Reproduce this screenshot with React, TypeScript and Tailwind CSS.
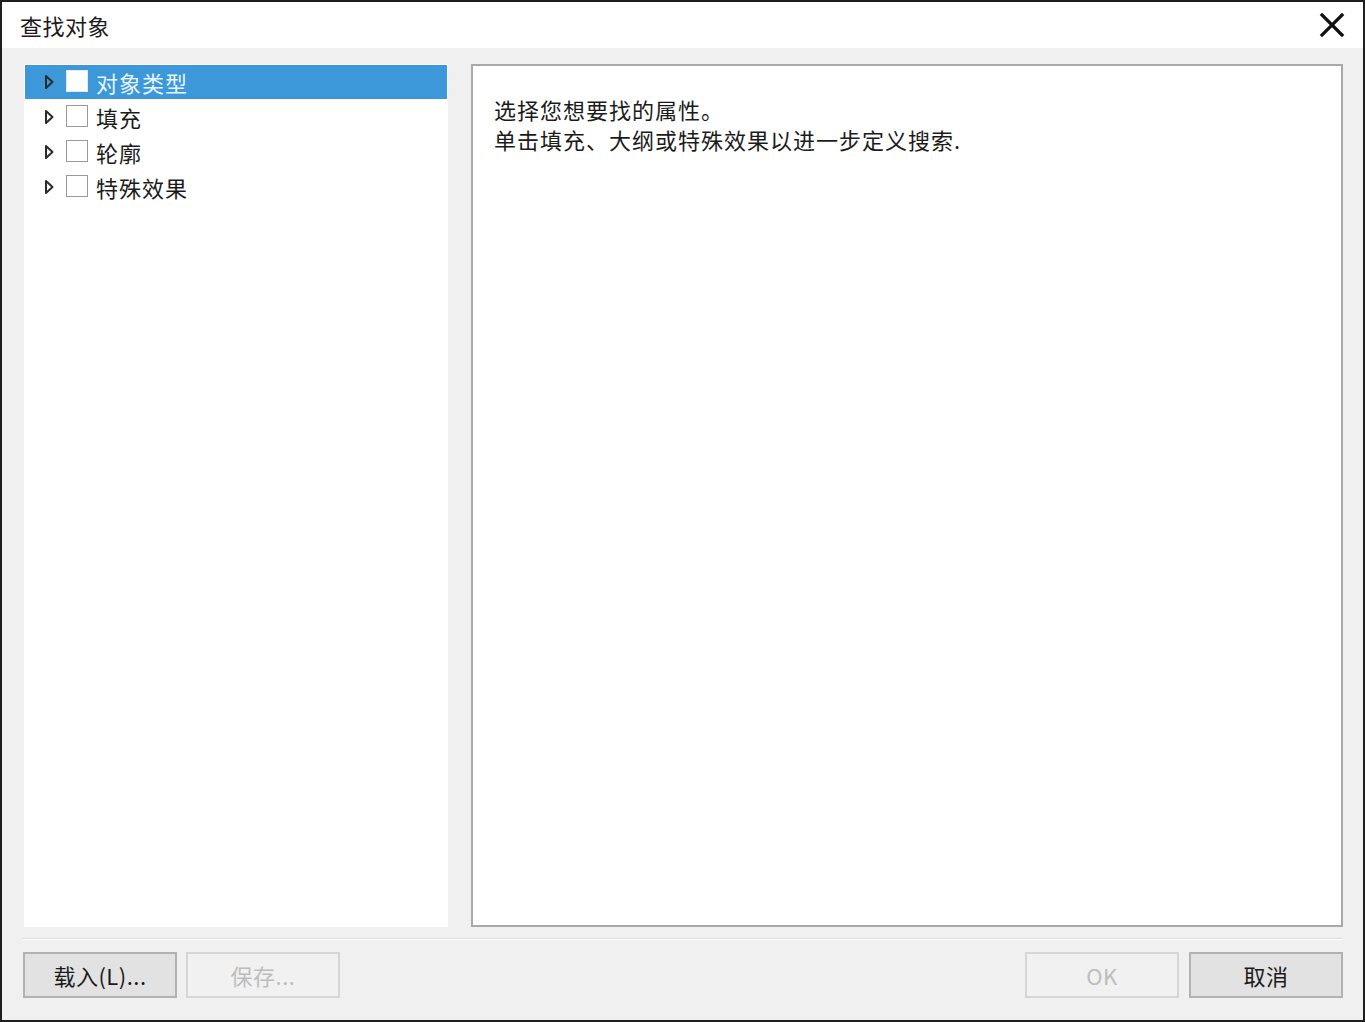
import React from "react";

const items = ["对象类型", "填充", "轮廓", "特殊效果"];

const Arrow = () => (
  <svg width="10" height="16" viewBox="0 0 10 16" className="shrink-0">
    <path d="M2 2 L8.5 8 L2 14 Z" fill="none" stroke="#2b2b2b" strokeWidth="2" strokeLinejoin="round" />
  </svg>
);

const Button = ({ label, disabled }: { label: string; disabled?: boolean }) => (
  <div
    className={
      disabled
        ? "w-[154px] h-[46px] flex items-center justify-center border-2 border-[#d6d6d6] bg-[#f1f1f1] text-[#bdbdbd] text-[22px] tracking-[0.5px]"
        : "w-[154px] h-[46px] flex items-center justify-center border-2 border-[#b2b2b2] bg-[#e2e2e2] text-[#1b1b1b] text-[22px] tracking-[0.5px]"
    }
  >
    {label}
  </div>
);

export default function App() {
  return (
    <div className="w-[1365px] h-[1022px] border-2 border-[#1e1e1e] bg-white flex flex-col font-['Noto_Sans_CJK_SC',sans-serif] text-[#1b1b1b]">
      <div className="h-[46px] shrink-0 flex items-center justify-between pl-[18px] pr-[18px]">
        <span className="text-[22px] tracking-[0.5px]">查找对象</span>
        <svg width="26" height="26" viewBox="0 0 26 26">
          <path d="M3 3 L23 23 M23 3 L3 23" stroke="#111" strokeWidth="3.2" strokeLinecap="square" />
        </svg>
      </div>

      <div className="flex-1 bg-[#f0f0f0] flex flex-col pt-[16px] pl-[21px] pr-[20px] pb-[22px]">
        <div className="flex-1 flex pl-[1px] gap-[23px]">
          <div className="w-[424px] bg-white pt-[1px] pl-[1px] pr-[1px]">
            {items.map((item, i) => (
              <div
                key={item}
                className={
                  i === 0
                    ? "h-[34px] mb-[1px] flex items-center bg-[#3d98da] pl-[19px]"
                    : "h-[34px] mb-[1px] flex items-center pl-[19px]"
                }
              >
                <Arrow />
                <div
                  className={
                    i === 0
                      ? "ml-[12px] w-[22px] h-[22px] bg-white border border-[#e8e8e8] mb-[2px]"
                      : "ml-[12px] w-[22px] h-[22px] bg-white border border-[#9a9a9a] mb-[2px]"
                  }
                />
                <span
                  className={
                    i === 0
                      ? "ml-[8px] text-[22px] tracking-[1px] text-[#e8f3fc]"
                      : "ml-[8px] text-[22px] tracking-[1px]"
                  }
                >
                  {item}
                </span>
              </div>
            ))}
          </div>

          <div className="flex-1 bg-white border-2 border-[#a9a9a9] pl-[21px] pt-[28px] text-[22px] tracking-[1px] leading-[30px]">
            <div>选择您想要找的属性。</div>
            <div>单击填充、大纲或特殊效果以进一步定义搜索.</div>
          </div>
        </div>

        <div className="mt-[11px] h-[2px] border-t border-[#d9d9d9] border-b border-b-white" />

        <div className="mt-[12px] flex items-center">
          <div className="flex gap-[9px]">
            <Button label="载入(L)..." />
            <Button label="保存..." disabled />
          </div>
          <div className="ml-auto flex gap-[10px]">
            <Button label="OK" disabled />
            <Button label="取消" />
          </div>
        </div>
      </div>
    </div>
  );
}
